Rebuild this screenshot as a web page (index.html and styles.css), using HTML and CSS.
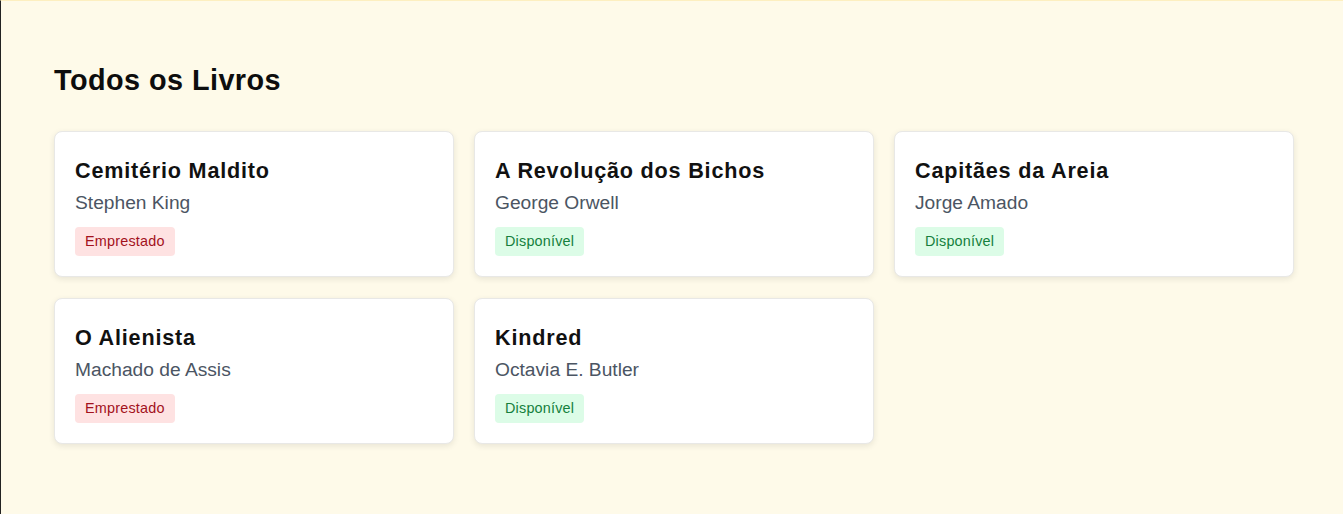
FILE: index.html
```html
<!DOCTYPE html>
<html lang="pt-BR">
<head>
<meta charset="utf-8">
<title>Todos os Livros</title>
<link rel="stylesheet" href="styles.css">
</head>
<body>
<main class="page">
  <h2 class="page-title">Todos os Livros</h2>
  <div class="grid">
    <article class="card">
      <h3 class="card-title">Cemitério Maldito</h3>
      <p class="card-author">Stephen King</p>
      <span class="badge badge-loaned">Emprestado</span>
    </article>
    <article class="card">
      <h3 class="card-title">A Revolução dos Bichos</h3>
      <p class="card-author">George Orwell</p>
      <span class="badge badge-available">Disponível</span>
    </article>
    <article class="card">
      <h3 class="card-title">Capitães da Areia</h3>
      <p class="card-author">Jorge Amado</p>
      <span class="badge badge-available">Disponível</span>
    </article>
    <article class="card">
      <h3 class="card-title">O Alienista</h3>
      <p class="card-author">Machado de Assis</p>
      <span class="badge badge-loaned">Emprestado</span>
    </article>
    <article class="card">
      <h3 class="card-title">Kindred</h3>
      <p class="card-author">Octavia E. Butler</p>
      <span class="badge badge-available">Disponível</span>
    </article>
  </div>
</main>
</body>
</html>
```

FILE: styles.css
```css
* { box-sizing: border-box; }

html, body {
  margin: 0;
  height: 100%;
}

body {
  background: #fefae9;
  font-family: "Liberation Sans", Arial, sans-serif;
  color: #111;
}

.page {
  min-height: 100%;
  border-top: 1px solid #fdefc0;
  border-left: 1px solid #222;
  padding: 63px 49px 40px 53px;
}

.page-title {
  margin: 0 0 34px;
  font-size: 28.8px;
  font-weight: 700;
  line-height: normal;
  letter-spacing: 0.45px;
  color: #0d0d0d;
}

.grid {
  display: grid;
  grid-template-columns: repeat(3, 1fr);
  column-gap: 20px;
  row-gap: 21px;
}

.card {
  display: flex;
  flex-direction: column;
  align-items: flex-start;
  background: #fff;
  border: 1px solid #e8e8e6;
  border-radius: 8px;
  box-shadow: 0 2px 6px rgba(0, 0, 0, 0.09);
  padding: 20px 20px 20px;
}

.card-title {
  margin: 5px 0 0;
  font-size: 21.6px;
  line-height: 28px;
  font-weight: 700;
  letter-spacing: 0.8px;
  color: #111;
}

.card-author {
  margin: 6px 0 0;
  font-size: 19.2px;
  line-height: 24px;
  color: #4b5563;
}

.badge {
  margin-top: 12px;
  display: inline-block;
  font-size: 14.4px;
  line-height: 17px;
  letter-spacing: 0.2px;
  padding: 6px 10px;
  border-radius: 4px;
}

.badge-loaned {
  background: #fee2e2;
  color: #a3111c;
}

.badge-available {
  background: #dcfce7;
  color: #15803d;
}
```
